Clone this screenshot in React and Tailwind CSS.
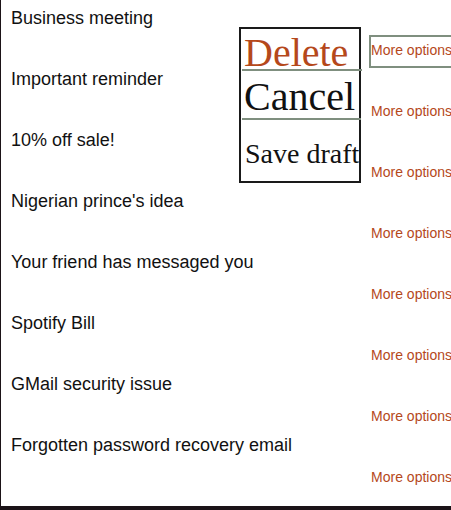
import React from "react";

const items = [
  "Business meeting",
  "Important reminder",
  "10% off sale!",
  "Nigerian prince's idea",
  "Your friend has messaged you",
  "Spotify Bill",
  "GMail security issue",
  "Forgotten password recovery email",
];

export default function App() {
  return (
    <div className="h-[510px] w-[451px] overflow-hidden bg-[#1b1317]">
      <div className="relative ml-[1px] h-[506px] bg-white font-['Liberation_Sans',Arial,sans-serif]">
        <div className="flex flex-col pt-[8px]">
          {items.map((t, i) => (
            <div key={t} className="flex h-[61px] flex-col">
              <div className="pl-[10px] text-[18px] leading-[20px] text-[#111]">{t}</div>
              <div className="mt-[7px] mr-[-3px] flex justify-end">
                <button
                  className={
                    "h-[33px] border-2 px-0 pb-[2px] text-[14px] leading-[27px] text-[#b5481b] " +
                    (i === 0 ? "border-[#7f8f7f]" : "border-transparent")
                  }
                >
                  More options
                </button>
              </div>
            </div>
          ))}
        </div>
        <div className="absolute left-[238px] top-[27px] h-[156px] w-[122px] border-2 border-[#1a1a1a] bg-white font-['Liberation_Serif','Times_New_Roman',serif]">
          <div className="ml-[1px] h-[42px] w-[120px] whitespace-nowrap border-b-2 border-[#7f8f7f] pl-[2px] text-[40px] leading-[48px] text-[#b5481b]">
            Delete
          </div>
          <div className="ml-[1px] h-[49px] w-[119px] whitespace-nowrap border-b-2 border-[#7f8f7f] pl-[2px] text-[40px] leading-[52px] text-[#111]">
            Cancel
          </div>
          <div className="ml-[1px] h-[61px] whitespace-nowrap pl-[3px] pt-[7px] text-[28px] leading-[54px] text-[#111]">
            Save draft
          </div>
        </div>
      </div>
    </div>
  );
}
